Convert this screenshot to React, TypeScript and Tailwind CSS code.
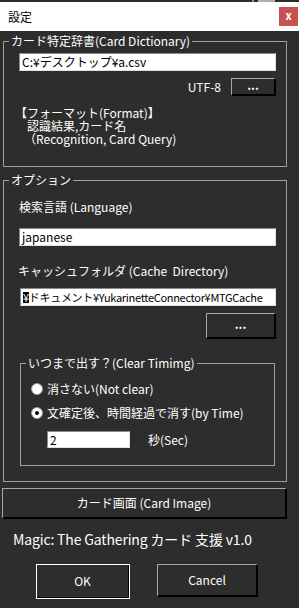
import React from "react";

const FONT = { fontFamily: '"Noto Sans CJK JP", "Noto Sans", sans-serif' };

function Input({ className, children }: { className: string; children: React.ReactNode }) {
  return (
    <div
      className={`bg-white border border-t-[#8a8a8a] border-l-[#8a8a8a] border-r-[#e0e0e0] border-b-[#e0e0e0] flex items-center pl-[2px] text-black leading-none overflow-hidden whitespace-nowrap ${className}`}
    >
      {children}
    </div>
  );
}

function Btn({ className, children }: { className: string; children: React.ReactNode }) {
  return (
    <div
      className={`bg-[#2d2d2d] border-t border-l border-t-[#a8a8a8] border-l-[#a8a8a8] border-r-2 border-b-2 border-r-black border-b-black flex items-center justify-center text-white text-[12px] ${className}`}
    >
      {children}
    </div>
  );
}

function Radio({ checked }: { checked?: boolean }) {
  return (
    <div className="w-[12px] h-[12px] rounded-full bg-white border border-[#9a9a9a] flex items-center justify-center shrink-0">
      {checked && <div className="w-[4px] h-[4px] rounded-full bg-black" />}
    </div>
  );
}

export default function App() {
  return (
    <div className="w-[299px] h-[608px] bg-[#2d2d2d] overflow-hidden text-white" style={FONT}>
      <div className="h-[2px] flex">
        <div className="w-[252px]" />
        <div className="w-[2px] bg-[#8a8a8a]" />
        <div className="w-[4px]" />
        <div className="w-[17px] bg-[#b0b0b0]" />
      </div>
      <div className="h-[29px] bg-white flex items-center justify-between pl-[8px] pr-[1px]">
        <span className="text-black text-[12px] leading-none">設定</span>
        <div className="w-[19px] h-[19px] bg-[#c75050] flex items-center justify-center text-white text-[11px] font-bold leading-none pb-[2px]">
          x
        </div>
      </div>
      <div className="px-[2px] pt-[2px] flex flex-col">
        <fieldset className="ml-[1px] w-[284px] border border-[#a0a0a0] pb-[21px]">
          <legend className="ml-[5px] px-[2px] text-[12px] leading-[16px]">カード特定辞書(Card Dictionary)</legend>
          <Input className="mt-[4px] ml-[15px] w-[257px] h-[18px] text-[12px]">C:¥デスクトップ¥a.csv</Input>
          <div className="mt-[7px] h-[18px] flex items-center justify-end pr-[10px] gap-[10px]">
            <span className="text-[12px] leading-none">UTF-8</span>
            <Btn className="w-[45px] h-[18px] font-bold leading-none pb-[4px]">...</Btn>
          </div>
          <div className="mt-[10px] text-[12px] leading-[13px]">
            <div className="pl-[11px] h-[13px]">【フォーマット(Format)】</div>
            <div className="pl-[23px] h-[13px]">認識結果,カード名</div>
            <div className="pl-[20px] h-[13px]">（Recognition, Card Query)</div>
          </div>
        </fieldset>

        <fieldset className="mt-[5px] ml-[1px] w-[284px] border border-[#a0a0a0] pb-[15px]">
          <legend className="ml-[5px] px-[2px] text-[12px] leading-[16px]">オプション</legend>
          <div className="mt-[11px] pl-[15px] text-[12px] leading-[16px]">検索言語 (Language)</div>
          <Input className="mt-[13px] ml-[15px] w-[257px] h-[18px] text-[12px]">japanese</Input>
          <div className="mt-[17px] pl-[14px] text-[12px] leading-[16px]">キャッシュフォルダ (Cache&nbsp;&nbsp;Directory)</div>
          <Input className="mt-[9px] ml-[16px] w-[256px] h-[18px] text-[11px] tracking-[-0.3px]">
            <span className="bg-black text-white">¥</span>
            <span>ドキュメント¥YukarinetteConnector¥MTGCache</span>
          </Input>
          <div className="flex justify-end pr-[10px] mt-[7px]">
            <Btn className="w-[70px] h-[26px] font-bold leading-none pb-[4px]">...</Btn>
          </div>
          <fieldset className="mt-[16px] ml-[16px] w-[255px] border border-[#a0a0a0] pb-[17px]">
            <legend className="ml-[5px] px-[2px] text-[12px] leading-[16px]">いつまで出す？(Clear Timimg)</legend>
            <div className="mt-[10px] h-[16px] flex items-center pl-[10px] gap-[4px] text-[12px]">
              <Radio />
              <span>消さない(Not clear)</span>
            </div>
            <div className="mt-[8px] h-[16px] flex items-center pl-[10px] gap-[4px] text-[12px]">
              <Radio checked />
              <span>文確定後、時間経過で消す(by Time)</span>
            </div>
            <div className="mt-[10px] flex items-center pl-[26px] gap-[18px]">
              <Input className="w-[83px] h-[17px] text-[12px]">2</Input>
              <span className="text-[12px] leading-none">秒(Sec)</span>
            </div>
          </fieldset>
        </fieldset>

        <Btn className="mt-[6px] w-[285px] h-[31px]">カード画面 (Card Image)</Btn>
        <div className="mt-[12px] pl-[11px] text-[14px] leading-[16px] tracking-[-0.15px]">Magic: The Gathering カード 支援 v1.0</div>
        <div className="mt-[17px] flex items-start">
          <div className="ml-[34px] w-[94px] h-[35px] border border-white flex items-center justify-center text-[12px]">
            <div className="w-full h-full border-r border-b border-black flex items-center justify-center">OK</div>
          </div>
          <Btn className="ml-[27px] w-[101px] h-[33px]">Cancel</Btn>
        </div>
      </div>
    </div>
  );
}
